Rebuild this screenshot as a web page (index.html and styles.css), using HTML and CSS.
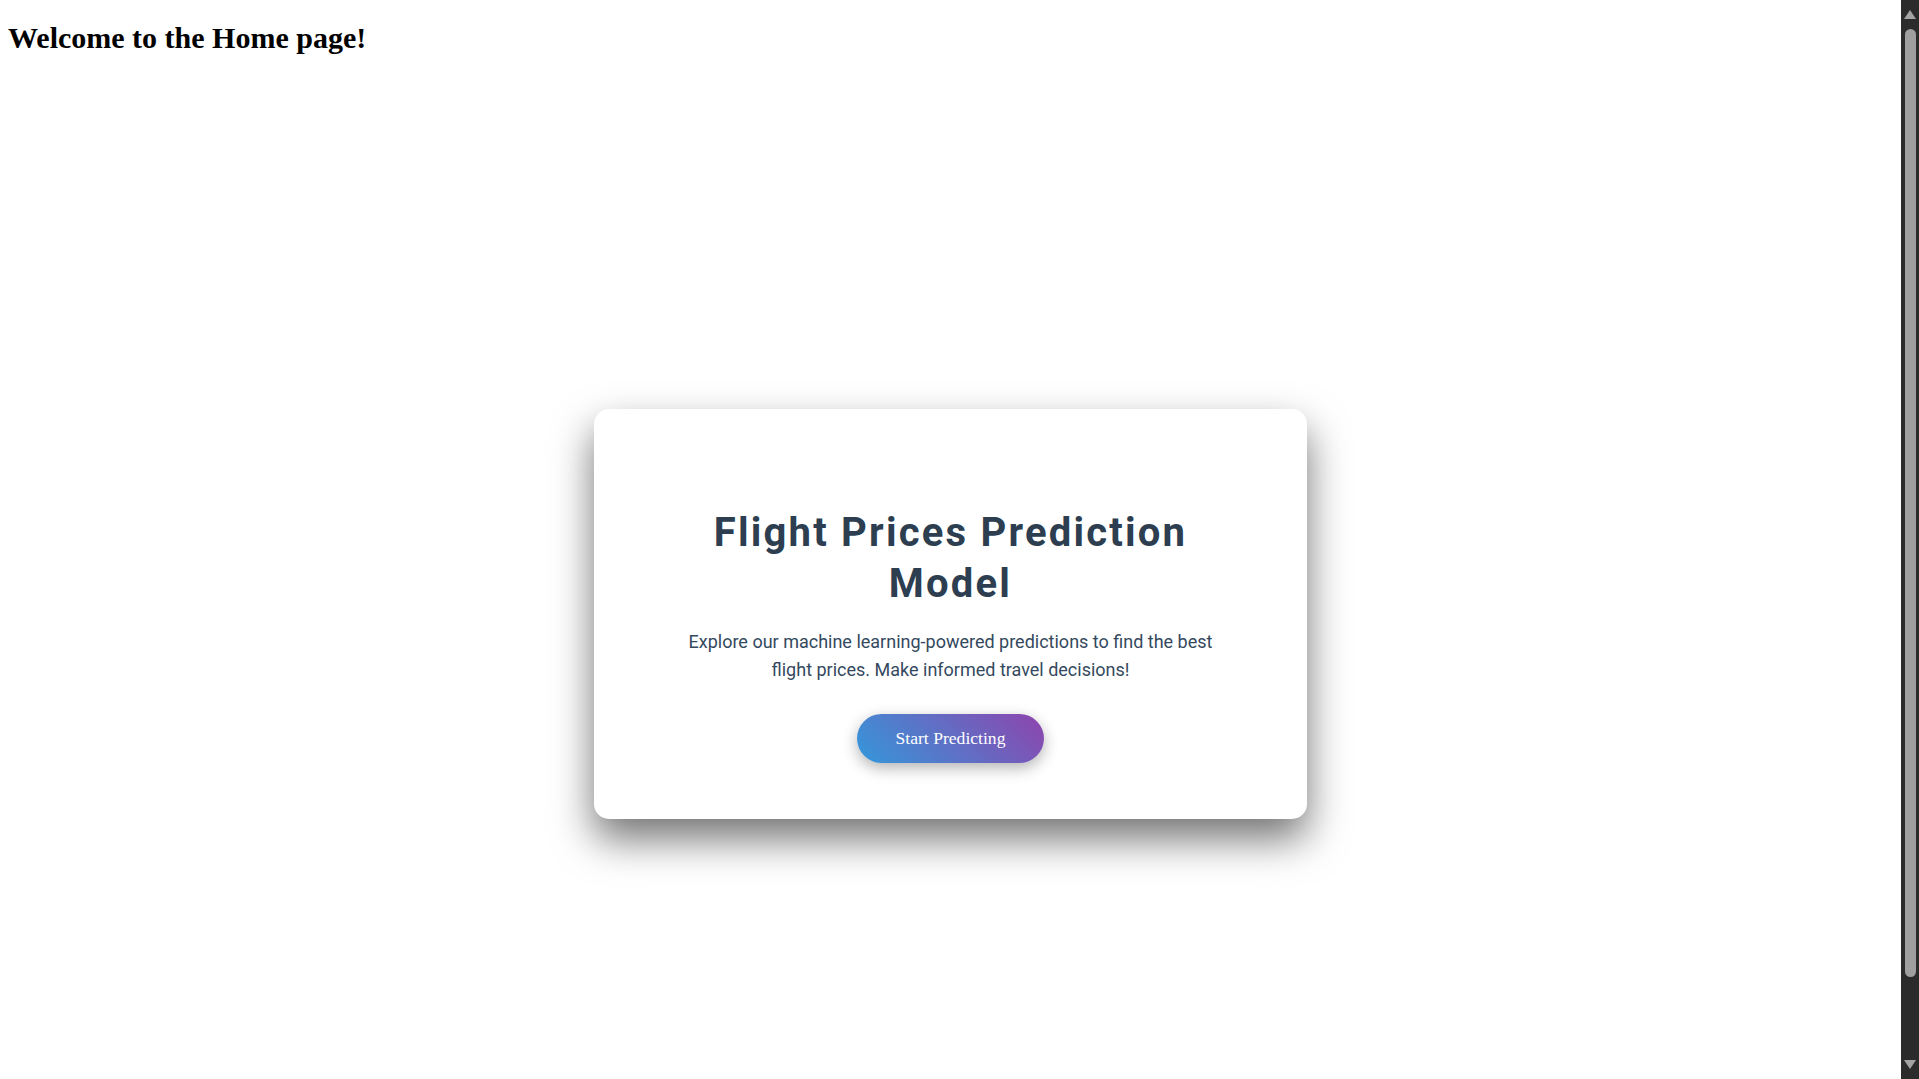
FILE: index.html
```html
<!DOCTYPE html>
<html lang="en">
<head>
<meta charset="utf-8">
<title>Home</title>
<link rel="stylesheet" href="styles.css">
</head>
<body>
<h1 class="welcome">Welcome to the Home page!</h1>
<main class="hero">
  <section class="card">
    <h2 class="card-title">Flight Prices Prediction Model</h2>
    <p class="card-text">Explore our machine learning-powered predictions to find the best flight prices. Make informed travel decisions!</p>
    <button class="cta" type="button">Start Predicting</button>
  </section>
</main>
<div class="scrollbar" aria-hidden="true">
  <svg class="sb-arrow" width="18" height="29" viewBox="0 0 18 29"><polygon points="3,19 15,19 9,10" fill="#a3a3a3"/></svg>
  <div class="sb-track"><div class="sb-thumb"></div></div>
  <svg class="sb-arrow" width="18" height="29" viewBox="0 0 18 29"><polygon points="3,10 15,10 9,19" fill="#a3a3a3"/></svg>
</div>
</body>
</html>
```
FILE: styles.css
```css
html {
  background: #ffffff;
  scrollbar-width: none;
}
html::-webkit-scrollbar {
  display: none;
}
body {
  margin: 0;
  padding: 0 26px 8px 8px;
  font-family: "Liberation Serif", "Times New Roman", serif;
}
.welcome {
  font-size: 30px;
  line-height: 34px;
  font-weight: bold;
  margin: 0;
  padding: 20.5px 0 20px;
  color: #000;
}
.hero {
  min-height: 100vh;
  display: flex;
  align-items: center;
  justify-content: center;
}
.card {
  box-sizing: border-box;
  width: 713px;
  background: #ffffff;
  border-radius: 15px;
  padding: 97.5px 64px 56px;
  text-align: center;
  box-shadow: 0 20px 40px rgba(0, 0, 0, 0.55);
}
.card-title {
  margin: 0 0 19px;
  font-family: Roboto, "Noto Sans", sans-serif;
  font-weight: 700;
  font-size: 40px;
  line-height: 51px;
  letter-spacing: 2.2px;
  color: #2c3e50;
}
.card-text {
  max-width: 550px;
  margin: 0 auto 29px;
  font-family: Roboto, "Noto Sans", sans-serif;
  font-size: 18px;
  line-height: 28.8px;
  color: #34495e;
}
.cta {
  border: none;
  border-radius: 30px;
  padding: 14px 38.5px;
  font-family: "Liberation Serif", "Times New Roman", serif;
  font-size: 17.6px;
  line-height: 20.7px;
  color: #ffffff;
  background: linear-gradient(45deg, #3498db, #8e44ad);
  box-shadow: 0 5px 15px rgba(0, 0, 0, 0.3);
  cursor: pointer;
}
.scrollbar {
  position: fixed;
  top: 0;
  right: 0;
  width: 18px;
  height: 100vh;
  background: #2b2b2b;
  display: flex;
  flex-direction: column;
}
.sb-arrow {
  display: block;
  flex: none;
}
.sb-track {
  flex: 1;
  padding: 0 3px 73px 4px;
}
.sb-thumb {
  height: 100%;
  background: #9f9f9f;
  border-radius: 6px;
}
```
